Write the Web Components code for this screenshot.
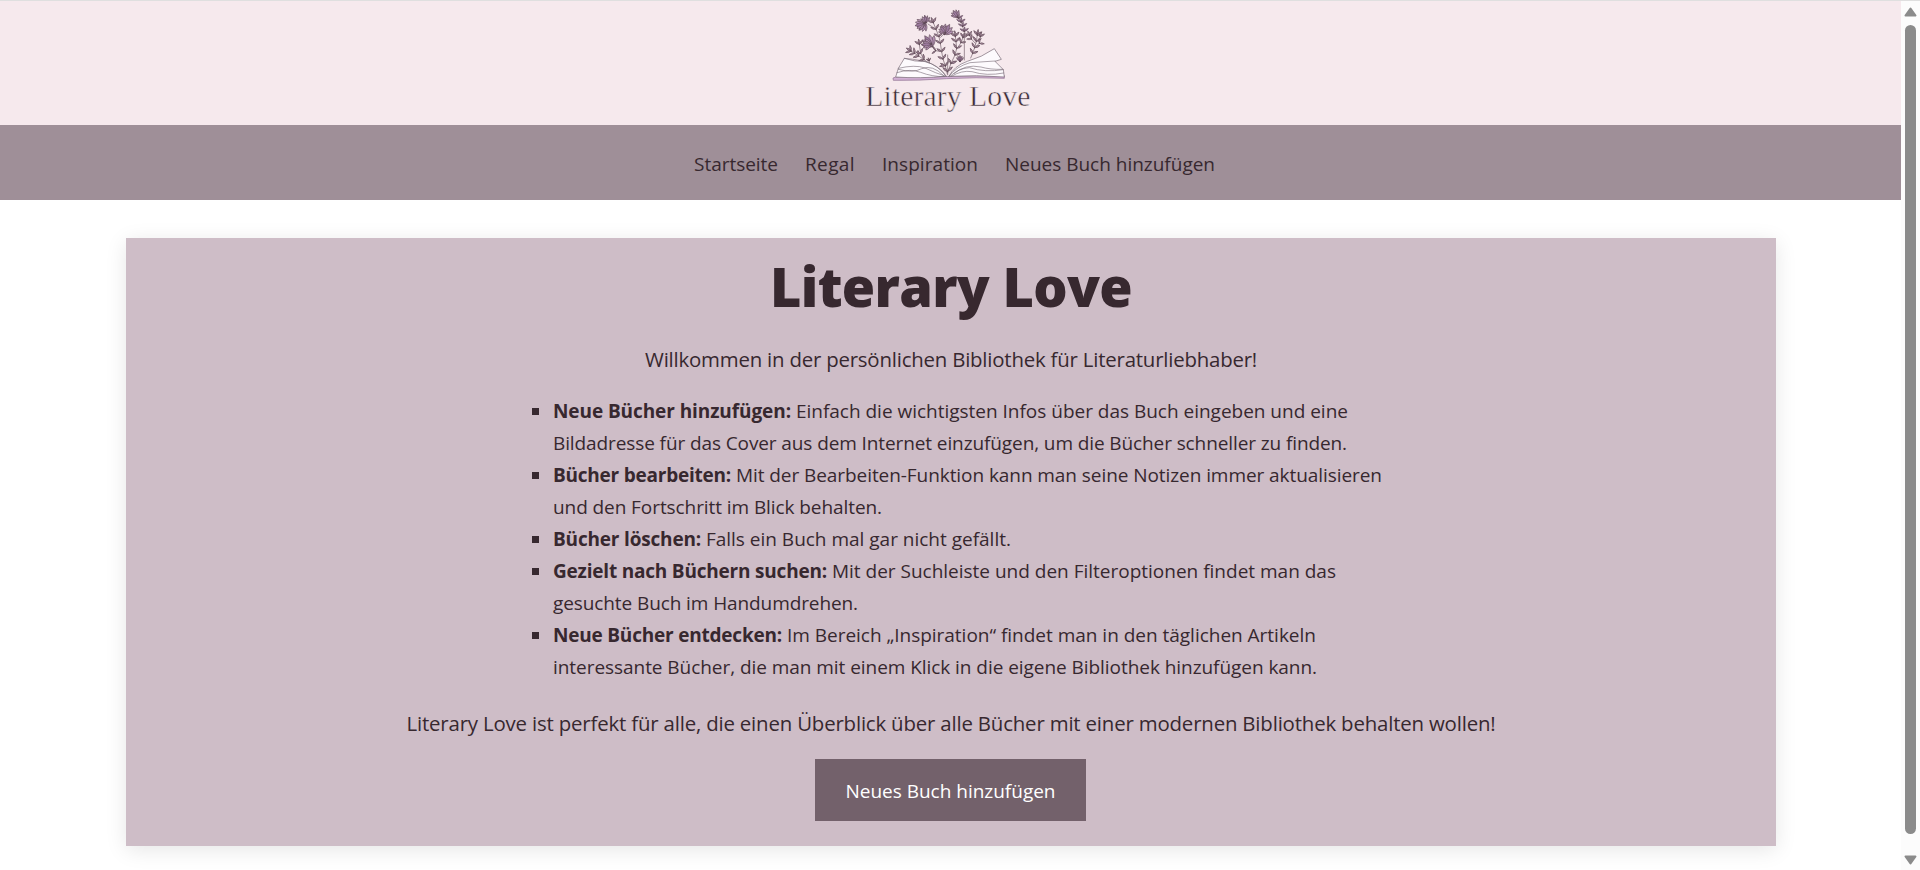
<!DOCTYPE html>
<html lang="de">
<head>
<meta charset="utf-8">
<title>Literary Love</title>
<style>
html,body{margin:0;height:100%;overflow:hidden;background:#fff}
body{font-family:"Open Sans","Noto Sans",sans-serif;color:#37282f}
</style>
</head>
<body>
<literary-app></literary-app>
<script>
function define(name, html, after) {
  const t = document.createElement('template');
  t.innerHTML = html;
  customElements.define(name, class extends HTMLElement {
    connectedCallback() {
      if (this.shadowRoot) return;
      this.attachShadow({mode: 'open'}).append(t.content.cloneNode(true));
      if (after) after(this);
    }
  });
}

/* Text set to a given measure by tracking */
define('fit-text', `<style>:host{display:inline-block;white-space:nowrap}</style><slot></slot>`, el => {
  const w = +el.getAttribute('w');
  const natural = el.getBoundingClientRect().width;
  el.style.letterSpacing = ((w - natural) / el.textContent.length).toFixed(4) + 'px';
});

/* Logo: open book with sprigs growing out of it */
define('brand-logo', `<style>
:host{display:block;width:200px;height:124px;margin-right:2px}
svg{display:block;width:200px;height:124px;overflow:visible}
text{font-family:"Liberation Serif",serif;font-size:89px;fill:#3b2b35;stroke:#f6e9ed;stroke-width:1.6px}
</style>
<svg viewBox="0 3 600 372" fill="none" stroke-linecap="round" stroke-linejoin="round">
<g id="plants" stroke="#7d6975" stroke-width="2.2"></g>
<path d="M135 232 L129 234 L130 241 Q210 242 290 236 Q380 231 463 235 L463 228 Z" fill="#d3b0d5" stroke="#8c6f8e" stroke-width="2"/>
<g fill="#fdfafd" stroke="#766874" stroke-width="2">
<path d="M288 229 Q265 196 225 184 Q195 186 163 175 L145 205 L137 231 Q210 236 288 229Z"/>
<path d="M297 229 Q312 198 352 184 Q395 172 433 146 L454 178 L435 184 L460 209 L463 231 Q380 224 297 229Z"/>
</g>
<g stroke="#766874" stroke-width="1.8">
<path d="M163 175 Q215 179 246 192 Q275 206 289 229 M145 205 Q195 193 225 204 Q258 220 285 228 M141 218 Q180 205 212 217 Q245 230 283 230 M145 208 Q190 220 215 206 Q248 193 280 226"/>
<path d="M297 228 Q320 199 360 188 L435 183 M300 229 Q325 205 358 203 Q405 218 460 209 M304 229 Q335 210 366 215 Q410 229 461 219 M312 221 Q345 191 393 201 Q420 209 458 208"/>
</g>
<text x="46" y="317" textLength="495" lengthAdjust="spacing">Literary Love</text>
</svg>`, el => {
  const leaf = (x, y, a, l, c) => `<path transform="translate(${x} ${y}) rotate(${a})" d="M0 0 Q${l*.5} ${-l*.34} ${l} 0 Q${l*.5} ${l*.34} 0 0Z" fill="${c || '#a98c9f'}" stroke="#5d4854" stroke-width="1.7"/>`;
  const sprig = (pts, l) => {
    let s = `<path d="M${pts.map(p => p.join(' ')).join('L')}"/>`;
    for (let i = 1; i < pts.length; i++) {
      const [x, y] = pts[i], [px, py] = pts[i-1];
      const a = Math.atan2(y - py, x - px) * 180 / Math.PI;
      s += leaf(x, y, a - 48, l) + leaf(x, y, a + 48, l);
      if (i === pts.length - 1) s += leaf(x, y, a, l);
    }
    return s;
  };
  const flower = (x, y, a, l) => [-44, 44, -22, 22, 0].map(d => leaf(x, y, a + d, l * (1 - Math.abs(d) / 300), d ? '#b795b8' : '#9c7a9f')).join('');
  el.shadowRoot.getElementById('plants').innerHTML =
    sprig([[292,222],[286,198],[279,177],[275,155],[271,130],[267,110],[258,88],[250,68]], 17) +
    sprig([[293,218],[303,190],[315,165],[320,145],[318,125],[316,109]], 17) +
    sprig([[320,148],[333,128],[339,112]], 15) +
    sprig([[275,155],[257,152],[247,138]], 14) +
    sprig([[362,174],[368,160],[374,143],[379,124],[382,105]], 17) +
    sprig([[374,143],[388,130],[391,110]], 15) + sprig([[376,130],[364,117],[359,106]], 14) +
    sprig([[238,190],[222,179],[206,168],[194,160],[183,153]], 17) +
    sprig([[222,179],[212,160],[208,133]], 16) + sprig([[240,193],[237,182]], 9) +
    `<path d="M343 180L343 98L334 65L318 45 M293 224L293 165 M272 112L285 98 M258 88L234 72 M250 140L236 127"/>` +
    [[343,94],[338,79],[333,66],[326,55]].map(([x,y]) => leaf(x,y,-150,15,'#a684a7') + leaf(x,y,-35,15,'#a684a7') + leaf(x,y,-85,13,'#a684a7')).join('') +
    flower(323,51,-125,24) + flower(228,68,-100,23) + flower(226,68,130,30) + flower(222,70,165,28) +
    flower(283,103,-62,34) + flower(286,98,-130,24) +
    flower(247,140,-125,40) + flower(243,132,175,28) + flower(330,184,-90,18) +
    leaf(293,215,-140,19) + leaf(293,213,-40,19) + leaf(286,196,170,18) + leaf(303,190,-20,18);
});

define('site-header', `<style>
:host{display:flex;justify-content:center;height:124px;background:#f6e9ed;border-top:1px solid #dfdfdf}
</style><brand-logo></brand-logo>`);

define('site-nav', `<style>
:host{display:flex;justify-content:center;gap:27px;height:75px;line-height:79px;background:#9f8f98;font-size:19px;box-sizing:border-box;padding-left:8px;color:#37282f}
</style><slot></slot>`);

define('feature-item', `<style>
:host{display:flex;line-height:32px}
i{width:7px;height:7px;margin:13px 14px 0 0;background:#37282f;flex:none}
div{white-space:nowrap}
</style><i></i><div><slot></slot></div>`);

define('primary-button', `<style>
:host{display:flex;justify-content:center;width:271px;height:62px;line-height:65px;background:#73616b;color:#fff;font-size:19px}
</style><slot></slot>`);

define('welcome-card', `<style>
:host{display:flex;flex-direction:column;align-items:center;box-sizing:border-box;width:1650px;height:608px;margin:38px 0 0 126px;padding-top:13px;background:#cebdc7;box-shadow:0 4px 20px rgba(0,0,0,.1)}
h1{margin:0;font-size:54px;line-height:70px;font-weight:800}
p{margin:0;font-size:20.4px;line-height:32px}
.intro{margin-top:22px}.outro{margin-top:24px}
.list{margin-top:20px;width:850px;margin-left:12px;font-size:19px}
b{font-weight:700}
primary-button{margin:20px 1px 0 0}
</style>
<h1><fit-text w="362">Literary Love</fit-text></h1>
<p class="intro"><fit-text w="612">Willkommen in der persönlichen Bibliothek für Literaturliebhaber!</fit-text></p>
<div class="list">
<feature-item><b><fit-text w="238">Neue Bücher hinzufügen:</fit-text></b> <fit-text w="552">Einfach die wichtigsten Infos über das Buch eingeben und eine</fit-text><br><fit-text w="794">Bildadresse für das Cover aus dem Internet einzufügen, um die Bücher schneller zu finden.</fit-text></feature-item>
<feature-item><b><fit-text w="178">Bücher bearbeiten:</fit-text></b> <fit-text w="646">Mit der Bearbeiten-Funktion kann man seine Notizen immer aktualisieren</fit-text><br><fit-text w="329">und den Fortschritt im Blick behalten.</fit-text></feature-item>
<feature-item><b><fit-text w="148">Bücher löschen:</fit-text></b> <fit-text w="305">Falls ein Buch mal gar nicht gefällt.</fit-text></feature-item>
<feature-item><b><fit-text w="274">Gezielt nach Büchern suchen:</fit-text></b> <fit-text w="504">Mit der Suchleiste und den Filteroptionen findet man das</fit-text><br><fit-text w="305">gesuchte Buch im Handumdrehen.</fit-text></feature-item>
<feature-item><b><fit-text w="229">Neue Bücher entdecken:</fit-text></b> <fit-text w="529">Im Bereich „Inspiration“ findet man in den täglichen Artikeln</fit-text><br><fit-text w="764">interessante Bücher, die man mit einem Klick in die eigene Bibliothek hinzufügen kann.</fit-text></feature-item>
</div>
<p class="outro"><fit-text w="1089">Literary Love ist perfekt für alle, die einen Überblick über alle Bücher mit einer modernen Bibliothek behalten wollen!</fit-text></p>
<primary-button><fit-text w="210">Neues Buch hinzufügen</fit-text></primary-button>`);

define('scroll-bar', `<style>
:host{display:flex;flex-direction:column;align-items:center;box-sizing:border-box;width:19px;height:870px;background:#fcfcfc;border-top:1px solid #dfdfdf;padding-top:6px}
svg{display:block;width:13px;height:10px;fill:#8b8b8b;stroke:#8b8b8b;stroke-width:2;stroke-linejoin:round}
.thumb{width:11px;height:809px;border-radius:6px;background:#8b8b8b;margin:8px 0 21px}
</style>
<svg viewBox="0 0 13 10"><path d="M6.5 1.5L11.5 8.5H1.5Z"/></svg>
<div class="thumb"></div>
<svg viewBox="0 0 13 10"><path d="M6.5 8.5L11.5 1.5H1.5Z"/></svg>`);

define('literary-app', `<style>
:host{display:grid;grid-template-columns:1901px 19px;width:1920px;height:870px;overflow:hidden}
main{display:flex;flex-direction:column}
</style>
<main>
<site-header></site-header>
<site-nav><fit-text w="84">Startseite</fit-text><fit-text w="50">Regal</fit-text><fit-text w="96">Inspiration</fit-text><fit-text w="210">Neues Buch hinzufügen</fit-text></site-nav>
<welcome-card></welcome-card>
</main>
<scroll-bar></scroll-bar>`);
</script>
</body>
</html>
